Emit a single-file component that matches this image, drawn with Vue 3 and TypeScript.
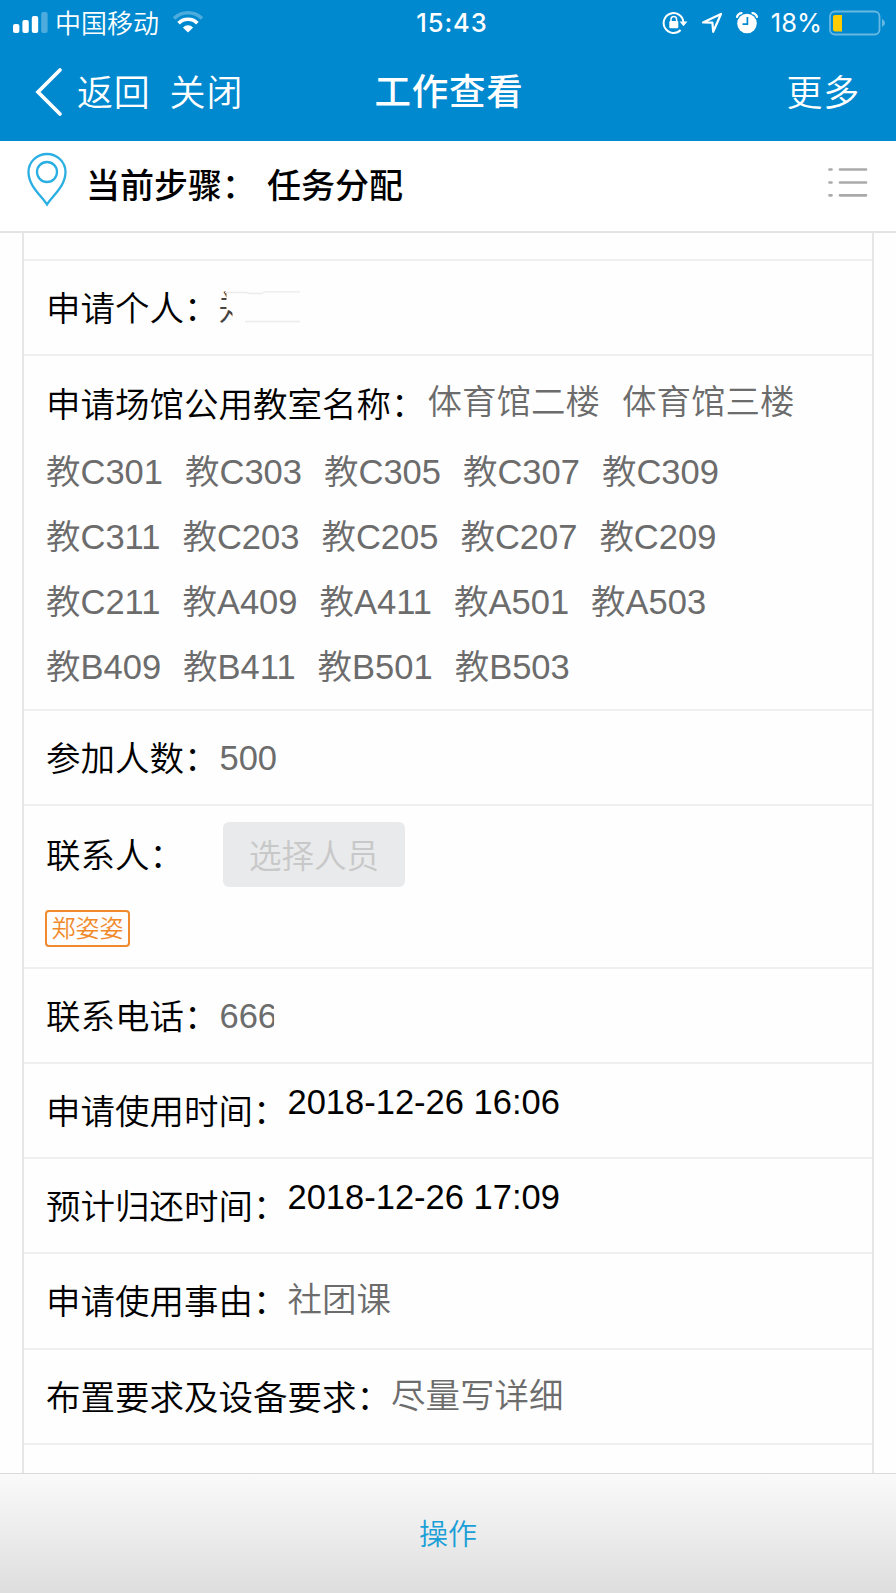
<script setup lang="ts">
interface Field {
  label: string
  value: string
  kind: 'text' | 'number' | 'date'
  size?: string
}

const roomLines: string[][] = [
  ['教C301', '教C303', '教C305', '教C307', '教C309'],
  ['教C311', '教C203', '教C205', '教C207', '教C209'],
  ['教C211', '教A409', '教A411', '教A501', '教A503'],
  ['教B409', '教B411', '教B501', '教B503'],
]

const venues: string[] = ['体育馆二楼', '体育馆三楼']

const details: Field[] = [
  { label: '申请使用时间：', value: '2018-12-26 16:06', kind: 'date' },
  { label: '预计归还时间：', value: '2018-12-26 17:09', kind: 'date' },
  { label: '申请使用事由：', value: '社团课', kind: 'text', size: 'tall' },
  { label: '布置要求及设备要求：', value: '尽量写详细', kind: 'text' },
]
</script>

<template>
  <div class="screen">
    <header class="top">
      <div class="status">
        <div class="status-left">
          <svg class="signal" width="36" height="24" viewBox="0 0 36 24">
            <g fill="#fff">
              <rect x="1" y="13" width="6.4" height="9" rx="2" />
              <rect x="10.4" y="9" width="6.4" height="13" rx="2" />
              <rect x="19.8" y="5" width="6.4" height="17" rx="2" />
              <rect x="29.2" y="1" width="6.4" height="21" rx="2" opacity=".3" />
            </g>
          </svg>
          <span class="carrier">中国移动</span>
          <svg class="wifi" width="32" height="24" viewBox="0 0 32 24">
            <g fill="none" stroke="#fff" stroke-width="3.6">
              <path d="M2 9.500C9.800 1.800 22.200 1.800 30 9.500" opacity=".3" />
              <path d="M6.600 14.200C11.800 9 20.200 9 25.400 14.200" />
            </g>
            <path d="M10.800 18.400Q16 14 21.200 18.400L16 23.600Z" fill="#fff" />
          </svg>
        </div>
        <span class="clock">15:43</span>
        <div class="status-right">
          <svg class="rotation" width="26" height="24" viewBox="0 0 26 24">
            <path d="M21.400 11A9.900 9.900 0 1 0 18.600 19" fill="none" stroke="#fff" stroke-width="2" />
            <path d="M17.600 10.600h7.800l-3.900 4.600z" fill="#fff" />
            <rect x="7.300" y="10" width="9" height="7.200" rx="1" fill="#fff" />
            <path d="M9 10.500V8.300a2.800 2.800 0 0 1 5.600 0v2.200" fill="none" stroke="#fff" stroke-width="1.500" />
          </svg>
          <svg class="arrow" width="22" height="22" viewBox="0 0 22 22">
            <path d="M2 10.500L20 2 12.200 19.800 11.400 10.700Z" fill="none" stroke="#fff" stroke-width="2.200" stroke-linejoin="round" />
          </svg>
          <svg class="alarm" width="22" height="24" viewBox="0 0 22 24">
            <circle cx="11" cy="12.500" r="9.800" fill="#fff" />
            <path d="M.8 6.800A5 5 0 0 1 6.400 2.200M21.200 6.800A5 5 0 0 0 15.600 2.200" fill="none" stroke="#fff" stroke-width="2.200" />
            <path d="M11.400 6v7.200H6.500" fill="none" stroke="#0089cf" stroke-width="1.700" />
          </svg>
          <span class="percent">18%</span>
          <svg class="battery" width="57" height="26" viewBox="0 0 57 26">
            <rect x="1" y="1.500" width="49.500" height="23" rx="5" fill="none" stroke="#67b8e2" stroke-width="1.800" />
            <path d="M53 9q3 1.500 3 4t-3 4z" fill="#67b8e2" />
            <path d="M6 5h7v16.500H6q-2 0-2-2V7q0-2 2-2z" fill="#fc0" />
          </svg>
        </div>
      </div>
      <nav class="nav">
        <div class="nav-left">
          <svg class="chevron" width="28" height="50" viewBox="0 0 28 50">
            <path d="M25 3L3 25 25 47" fill="none" stroke="#fff" stroke-width="3.700" stroke-linecap="round" stroke-linejoin="miter" />
          </svg>
          <span class="back">返回</span>
          <span class="close">关闭</span>
        </div>
        <h1 class="title">工作查看</h1>
        <span class="more">更多</span>
      </nav>
    </header>

    <section class="step">
      <svg class="pin" width="42" height="56" viewBox="0 0 42 56">
        <g fill="none" stroke="#2aafe3" stroke-width="2.300">
          <path d="M21 52.500C16 44 2.500 34.500 2.500 20A18.500 18 0 0 1 39.500 20C39.500 34.500 26 44 21 52.500Z" />
          <circle cx="21" cy="20" r="10" />
        </g>
      </svg>
      <span class="step-label">当前步骤：</span>
      <span class="step-name">任务分配</span>
      <svg class="list" width="40" height="31" viewBox="0 0 40 31">
        <path d="M1.500 2.500h2M1.500 15.500h2M1.500 28.300h2M12 2.500h26M12 15.500h26M12 28.300h26" stroke="#aaa" stroke-width="2.700" stroke-linecap="round" />
      </svg>
    </section>

    <main class="form">
      <div class="row stub"></div>

      <div class="row">
        <span class="label">申请个人：</span>
        <span class="masked-name">
          <span class="masked-text">郑</span>
          <svg class="masked-trace" width="82" height="34" viewBox="0 0 82 34">
            <path d="M5 1.500H26L30 2.500H41L45 .8H80M25 30.500H80" fill="none" stroke="#ececec" stroke-width="1.300" />
          </svg>
        </span>
      </div>

      <div class="row rooms">
        <div class="venue-line">
          <span class="label">申请场馆公用教室名称：</span>
          <span v-for="venue in venues" :key="venue" class="value venue">{{ venue }}</span>
        </div>
        <div v-for="(line, i) in roomLines" :key="i" class="room-line">
          <span v-for="room in line" :key="room" class="value">{{ room }}</span>
        </div>
      </div>

      <div class="row">
        <span class="label">参加人数：</span>
        <span class="value number">500</span>
      </div>

      <div class="row contact">
        <div class="contact-line">
          <span class="label">联系人：</span>
          <button class="picker" type="button" disabled>选择人员</button>
        </div>
        <span class="tag">郑姿姿</span>
      </div>

      <div class="row">
        <span class="label">联系电话：</span>
        <span class="value number phone">666</span>
      </div>

      <div v-for="field in details" :key="field.label" class="row" :class="field.size">
        <span class="label">{{ field.label }}</span>
        <span class="value" :class="field.kind">{{ field.value }}</span>
      </div>
    </main>

    <footer class="actions">操作</footer>
  </div>
</template>

<style>
body {
  margin: 0;
  background: #fff;
}
</style>

<style scoped>
.screen {
  display: flex;
  flex-direction: column;
  width: 896px;
  height: 1593px;
  overflow: hidden;
  background: #fefefe;
  color: #000;
  font-family: "Liberation Sans", "Noto Sans CJK SC", sans-serif;
  font-size: 34.5px;
  font-weight: 350;
}

svg {
  display: block;
  flex: none;
}

.top {
  flex: none;
  height: 140.5px;
  background: #0089cf;
  color: #fff;
}

.status {
  display: grid;
  grid-template-columns: 1fr auto 1fr;
  align-items: center;
  height: 45px;
  padding: 0 10px 0 12px;
}

.status-left,
.status-right {
  display: flex;
  align-items: center;
}

.status-right {
  justify-content: flex-end;
}

.carrier {
  margin-left: 7px;
  padding-top: 2px;
  font-size: 26px;
  line-height: 40px;
}

.wifi {
  margin: 0 0 4px 13px;
}

.clock {
  margin-left: 6px;
  font-family: Inter, sans-serif;
  font-size: 25.5px;
  font-weight: 500;
  letter-spacing: 0.9px;
}

.rotation {
  margin-right: 0;
}

.arrow {
  margin-left: 13px;
}

.alarm {
  margin-left: 13px;
}

.percent {
  margin: 0 7px 0 13px;
  font-family: Inter, sans-serif;
  font-size: 25.5px;
  font-weight: 400;
}

.nav {
  display: grid;
  grid-template-columns: 1fr auto 1fr;
  align-items: center;
  height: 92px;
  padding: 0 36px 0 35px;
  font-size: 36px;
  letter-spacing: 0.8px;
}

.nav-left {
  display: flex;
  align-items: center;
}

.chevron {
  margin-top: 1px;
}

.back {
  margin: 0 19px 0 14px;
  padding-bottom: 2px;
}

.close {
  padding-bottom: 2px;
}

.title {
  margin: 0 0 0 3px;
  padding-bottom: 3px;
  font-size: 36.5px;
  font-weight: 500;
}

.more {
  justify-self: end;
  padding-bottom: 2px;
}

.step {
  display: flex;
  flex: none;
  align-items: center;
  box-sizing: border-box;
  height: 92.5px;
  padding: 0 28px 5px 26px;
  border-bottom: 2px solid #e4e4e4;
  background: #fff;
  font-size: 34px;
  font-weight: 500;
}

.pin {
  margin-bottom: 6px;
}

.step-label {
  margin-left: 18px;
}

.step-name {
  margin-left: 11px;
}

.list {
  margin-bottom: 1px;
  margin-left: auto;
}

.form {
  flex: none;
  box-sizing: border-box;
  width: 852px;
  height: 1240px;
  margin-left: 22px;
  border: solid #e6e6e6;
  border-width: 0 2px;
}

.row {
  display: flex;
  align-items: center;
  box-sizing: border-box;
  height: 95px;
  padding-left: 22px;
  border-bottom: 2px solid #efefef;
  line-height: 64px;
  white-space: nowrap;
}

.stub {
  height: 28px;
}

.tall {
  height: 96px;
}

.label {
  flex: none;
  padding-top: 2px;
}

.value {
  color: #6c6c6c;
}

.text {
  padding-bottom: 2px;
}

.number {
  padding-left: 1px;
}

.date {
  padding-bottom: 17px;
  color: #000;
}

.masked-name {
  position: relative;
  color: #444;
}

.masked-text {
  display: block;
  clip-path: polygon(0 0, 8px 0, 8px 34px, 14px 36px, 14px 64px, 0 64px);
}

.masked-trace {
  position: absolute;
  top: 15px;
  left: 1px;
}

.rooms {
  display: block;
  height: 355px;
  padding-top: 15px;
}

.venue-line,
.room-line {
  display: flex;
  height: 65px;
  line-height: 65px;
}

.room-line {
  gap: 22px;
}

.venue-line {
  height: 69px;
}

.venue {
  margin: -1px 20px 0 2px;
}

.contact {
  display: block;
  height: 163px;
  padding-top: 16px;
}

.contact-line {
  display: flex;
  height: 65px;
}

.picker {
  width: 182px;
  height: 65px;
  margin-left: 39px;
  padding: 3px 0 0;
  border: 0;
  border-radius: 6px;
  background: #e9eaec;
  color: #c8c8c8;
  font: inherit;
  font-size: 32.5px;
}

.tag {
  display: block;
  box-sizing: border-box;
  width: 85px;
  height: 37px;
  margin-top: 23px;
  margin-left: -1px;
  border: 2px solid #f08a2c;
  border-radius: 4px;
  color: #f08a2c;
  font-size: 24px;
  line-height: 33px;
  text-align: center;
}

.phone {
  clip-path: inset(0 3px 0 0);
}

.actions {
  display: flex;
  flex: 1;
  align-items: center;
  justify-content: center;
  padding-bottom: 4px;
  border-top: 1px solid #d9d9d9;
  background: linear-gradient(#fafafa, #dedede);
  color: #1a9fd6;
  font-size: 29px;
}
</style>
